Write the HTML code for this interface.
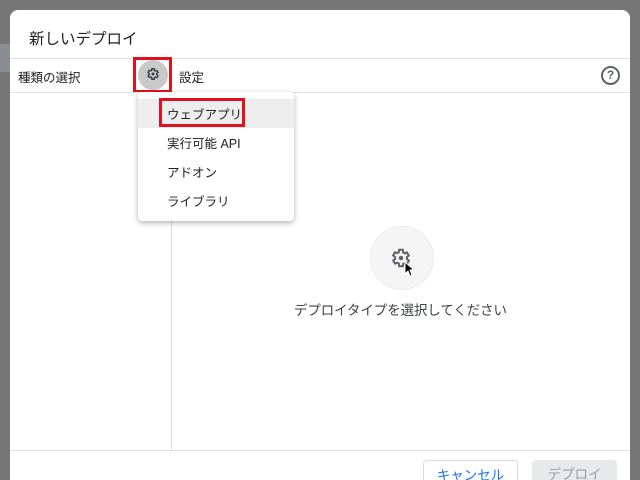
<!DOCTYPE html><html><head><meta charset="utf-8"><style>
html,body{margin:0;width:640px;height:480px;overflow:hidden}
body{background:#767676;position:relative;font-family:"Liberation Sans","Noto Sans CJK JP",sans-serif;color:#3c4043}
.dlg{position:absolute;left:10px;top:10px;width:620px;height:470px;background:#fff;border-radius:8px 8px 0 0;overflow:hidden}
.a{position:absolute}
.line{position:absolute;background:#e0e0e0}
</style></head><body>
<div class="a" style="left:0;top:44px;width:10px;height:28px;background:#8a8d94"></div>
<div class="dlg">
<div class="a" style="left:19px;top:17px;font-size:15.5px;color:#202124">新しいデプロイ</div>
<div class="line" style="left:0;top:48px;width:620px;height:1px"></div>
<div class="a" style="left:8px;top:57px;font-size:12.5px;color:#202124">種類の選択</div>
<div class="a" style="left:123px;top:47px;width:39px;height:36px;border:3px solid #e3101e;box-sizing:border-box"></div>
<div class="a" style="left:128px;top:50px;width:30px;height:30px;border-radius:50%;background:#c9c9c9"></div>
<svg class="a" style="left:136px;top:57px" width="14" height="14" viewBox="0 0 24 24"><path fill="none" stroke="#3c4043" stroke-width="2.4" d="M19.4 13a7.5 7.5 0 0 0 0-2l2.1-1.6-2-3.5-2.5 1a7 7 0 0 0-1.7-1L15 3h-4l-.4 2.7a7 7 0 0 0-1.7 1l-2.5-1-2 3.5L6.6 11a7.5 7.5 0 0 0 0 2l-2.1 1.6 2 3.5 2.5-1a7 7 0 0 0 1.7 1L11 21h4l.4-2.7a7 7 0 0 0 1.7-1l2.5 1 2-3.5z" transform="translate(-1 0)"/><circle cx="12" cy="12" r="2.5" fill="#3c4043"/></svg>
<div class="a" style="left:169px;top:57px;font-size:12.5px;color:#202124">設定</div>
<div class="a" style="left:591px;top:56px;width:15px;height:15px;border:2px solid #5f6368;border-radius:50%;font-size:12px;font-weight:bold;text-align:center;line-height:15px;color:#5f6368">?</div>
<div class="line" style="left:0;top:82px;width:620px;height:1px"></div>
<div class="line" style="left:161px;top:83px;width:1px;height:357px"></div>
<div class="a" style="left:360px;top:216px;width:62px;height:62px;border-radius:50%;background:#f5f5f6;border:1px solid #ececec"></div>
<svg class="a" style="left:380px;top:237px" width="22" height="22" viewBox="0 0 24 24"><path fill="none" stroke="#5f6368" stroke-width="2.2" d="M19.4 13a7.5 7.5 0 0 0 0-2l2.1-1.6-2-3.5-2.5 1a7 7 0 0 0-1.7-1L15 3h-4l-.4 2.7a7 7 0 0 0-1.7 1l-2.5-1-2 3.5L6.6 11a7.5 7.5 0 0 0 0 2l-2.1 1.6 2 3.5 2.5-1a7 7 0 0 0 1.7 1L11 21h4l.4-2.7a7 7 0 0 0 1.7-1l2.5 1 2-3.5z" transform="translate(-1 0)"/><circle cx="12" cy="12" r="2.5" fill="#5f6368"/></svg>
<svg class="a" style="left:394px;top:251px" width="10" height="16" viewBox="0 0 10 16"><path d="M1 1v12l3-3 2 5 2-1-2-5h4z" fill="#000" stroke="#fff" stroke-width="1"/></svg>
<div class="a" style="left:284px;top:289px;font-size:13.4px;color:#3c4043">デプロイタイプを選択してください</div>
<div class="line" style="left:0;top:440px;width:620px;height:1px"></div>
<div class="a" style="left:413px;top:450px;width:95px;height:36px;border:1px solid #dadce0;border-radius:4px;box-sizing:border-box;color:#1a73e8;font-size:13.5px;text-align:center;line-height:30px">キャンセル</div>
<div class="a" style="left:522px;top:450px;width:85px;height:36px;background:#e8e9ea;border-radius:4px;color:#a0a0a0;font-size:13.5px;text-align:center;line-height:30px">デプロイ</div>
</div>
<div class="a" style="left:138px;top:92px;width:156px;height:129px;background:#fff;border-radius:4px;box-shadow:0 2px 6px rgba(0,0,0,.3)">
<div class="a" style="left:0;top:7px;width:156px;height:29px;background:#eeeeee"></div>
<div class="a" style="left:21px;top:6px;width:86px;height:29px;border:3px solid #e3101e;box-sizing:border-box"></div>
<div class="a" style="left:29px;top:12px;font-size:12.5px;color:#202124">ウェブアプリ</div>
<div class="a" style="left:29px;top:41px;font-size:12.5px;color:#202124">実行可能 API</div>
<div class="a" style="left:29px;top:70px;font-size:12.5px;color:#202124">アドオン</div>
<div class="a" style="left:29px;top:99px;font-size:12.5px;color:#202124">ライブラリ</div>
</div>
</body></html>
